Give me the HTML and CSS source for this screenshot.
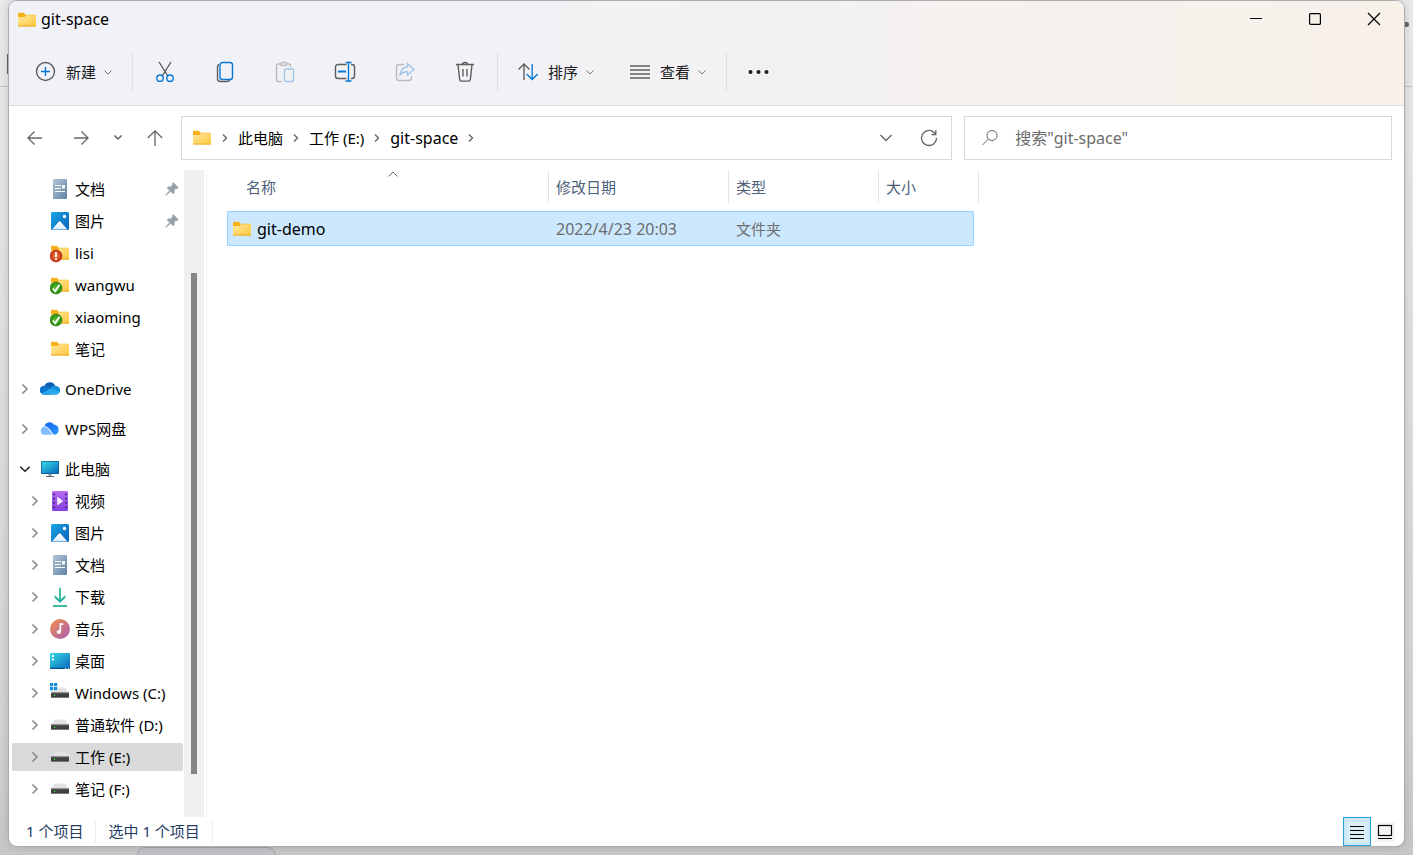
FILE: index.html
```html
<!DOCTYPE html>
<html lang="zh-CN">
<head>
<meta charset="utf-8">
<meta name="viewport" content="width=device-width, initial-scale=1">
<title>git-space</title>
<link rel="stylesheet" href="styles.css">
</head>
<body>
<svg class="sprite" aria-hidden="true">
  <defs>
    <linearGradient id="g-folder" x1="0" y1="0" x2="1" y2="1"><stop offset="0" stop-color="#ffe7a0"/><stop offset="1" stop-color="#ffc83d"/></linearGradient>
    <linearGradient id="g-doc" x1="0" y1="0" x2="1" y2="1"><stop offset="0" stop-color="#b3c6d8"/><stop offset="1" stop-color="#5f80a3"/></linearGradient>
    <linearGradient id="g-pic" x1="0" y1="0" x2="1" y2="1"><stop offset="0" stop-color="#18a4e6"/><stop offset="1" stop-color="#0a60b5"/></linearGradient>
    <linearGradient id="g-snow" x1="0" y1="0" x2="0" y2="1"><stop offset="0" stop-color="#fff"/><stop offset="1" stop-color="#d9ecfa"/></linearGradient>
    <linearGradient id="g-screen" x1="0" y1="0" x2="1" y2="1"><stop offset="0" stop-color="#35dbe6"/><stop offset="1" stop-color="#0a67bd"/></linearGradient>
    <linearGradient id="g-video" x1="0" y1="0" x2="0" y2="1"><stop offset="0" stop-color="#b56af0"/><stop offset="1" stop-color="#8540df"/></linearGradient>
    <linearGradient id="g-music" x1="0" y1="0" x2="1" y2="1"><stop offset="0" stop-color="#f59048"/><stop offset="1" stop-color="#a55bb5"/></linearGradient>
    <linearGradient id="g-down" x1="0" y1="0" x2="0" y2="1"><stop offset="0" stop-color="#35c48c"/><stop offset="1" stop-color="#12a0a0"/></linearGradient>
    <linearGradient id="g-wps" x1="0" y1="0" x2="1" y2="1"><stop offset="0" stop-color="#0d62ee"/><stop offset="1" stop-color="#2f9bff"/></linearGradient>
    <radialGradient id="g-ok"><stop offset="0" stop-color="#63c536"/><stop offset="1" stop-color="#268711"/></radialGradient>
    <radialGradient id="g-bad"><stop offset="0" stop-color="#f08a3c"/><stop offset="1" stop-color="#c42b1c"/></radialGradient>
  </defs>
  <symbol id="folder" viewBox="0 0 20 20"><path d="M1 3.800a1 1 0 0 1 1-1h5l1.500 2H18a1 1 0 0 1 1 1v4H1z" fill="#f8b117"/><path d="M1 7h6.700L9.200 5.300H19V16.500H1z" fill="url(#g-folder)"/><path d="M1 16h18" stroke="#eca824"/></symbol>
  <symbol id="doc" viewBox="0 0 20 20"><rect x="3" width="14" height="20" rx="1" fill="url(#g-doc)"/><path d="M5 6.500h6M5 9.500h6M5 12.500h10" stroke="#fff" stroke-width="1.200"/><path d="M12 6h3v3.500h-3z" fill="#fff"/></symbol>
  <symbol id="pic" viewBox="0 0 20 20"><rect x="1" y="1" width="18" height="18" rx="1.500" fill="url(#g-pic)"/><path d="M2 18.500l6.700-7.700a1.200 1.200 0 0 1 1.800 0l7 7.700z" fill="url(#g-snow)"/><circle cx="14.500" cy="5.500" r="1.700" fill="#fff"/></symbol>
  <symbol id="bad" viewBox="0 0 20 20"><use href="#folder"/><circle cx="6" cy="13" r="6" fill="url(#g-bad)" stroke="#b02a1a" stroke-width=".6"/><path d="M6 9v5M6 15.300v1.700" stroke="#fff" stroke-width="1.800"/></symbol>
  <symbol id="ok" viewBox="0 0 20 20"><use href="#folder"/><circle cx="6" cy="13" r="6" fill="url(#g-ok)" stroke="#25770f" stroke-width=".6"/><path d="M2.800 13.500l2.400 2.700 4.200-6.500" stroke="#fff" stroke-width="1.800" fill="none"/></symbol>
  <symbol id="onedrive" viewBox="0 0 20 20"><path d="M4.500 7A5.800 5.800 0 0 1 15.500 7.500L10 12z" fill="#0c5fb3"/><path d="M3.500 15.500a4.200 4.200 0 0 1 1.300-8.800c2 0 3.500.8 8.700 5L9 16z" fill="#0a72cf"/><path d="M10 9.500A5.200 5.200 0 0 1 15.500 7a4.400 4.400 0 0 1 4.200 6.500z" fill="#1490df"/><path d="M1.500 14.500l9-5 9 3.500c-.5 1.800-1.700 2.700-3.500 2.700H4.200c-1.100 0-2-.4-2.700-1.200z" fill="#28a8ea"/></symbol>
  <symbol id="wps" viewBox="0 0 20 20"><path d="M4.500 7.500a5.200 5.200 0 0 1 9.300-2 5.300 5.300 0 0 1 1.200 10.300C11 15.500 12 8.500 4.500 7.500z" fill="url(#g-wps)"/><path d="M.8 12.300a4.300 4.300 0 0 1 6-4.500c3.500 1.500 3 6 6.700 8H4a3.500 3.500 0 0 1-3.200-3.500z" fill="#80bdff"/><path d="M5 7.700c5 .4 4.500 5.900 9 8.200" stroke="#fff" fill="none" stroke-width=".8"/></symbol>
  <symbol id="pc" viewBox="0 0 20 20"><path d="M8.500 15h3v2.500h-3z" fill="#8a99a5"/><path d="M6 17.500h8" stroke="#5d6972"/><rect x="1" y="2" width="18" height="13" rx=".7" fill="#08568f"/><rect x="1.700" y="2.700" width="16.600" height="11.600" fill="url(#g-screen)"/></symbol>
  <symbol id="video" viewBox="0 0 20 20"><rect x="2" width="16" height="20" rx="1.300" fill="url(#g-video)"/><path d="M4 2.500v15M16 2.500v15" stroke="#45207c" stroke-width="1.700" stroke-dasharray="1.700 2.600"/><path d="M7.200 5.800v8.600l6-4.300z" fill="#f7efff"/></symbol>
  <symbol id="down" viewBox="0 0 20 20"><path d="M10.500 1h-1v12L5 8.800v2l5 4.700 5-4.700v-2L10.500 13z" fill="url(#g-down)" stroke="#21b493" stroke-width=".7"/><path d="M3 19h14" stroke="#1cae93" stroke-width="1.700"/></symbol>
  <symbol id="music" viewBox="0 0 20 20"><circle cx="10" cy="10" r="10" fill="url(#g-music)"/><ellipse cx="8.800" cy="13" rx="2.200" ry="2" fill="#fff"/><path d="M10.300 13V5.200h3" stroke="#fff" stroke-width="1.700" fill="none"/></symbol>
  <symbol id="desktop" viewBox="0 0 20 20"><rect y="2" width="20" height="16" rx="1" fill="url(#g-screen)"/><path d="M0 17.300h20" stroke="#07508f" stroke-width="1.300"/><path d="M2 4h2v2H2zM2 7.500h2v2H2z" fill="#fff"/><path d="M15 17.300h1.200M18 17.300h1.200" stroke="#fff"/></symbol>
  <symbol id="drive" viewBox="0 0 20 20"><path d="M4.500 4.500h11L19 10H1z" fill="#e2e3e6"/><rect x="1" y="9.700" width="18" height="5.300" fill="#414141"/><path d="M1 14.500h18" stroke="#777"/><path d="M1 10.100h18" stroke="#626262"/><path d="M4 11.700h1.300V13H4z" fill="#23e332"/></symbol>
  <symbol id="windrive" viewBox="0 0 20 20"><use href="#drive"/><path d="M-1-1h9v9h-9z" fill="#fff"/><path d="M0 0h3.200v3.200H0zM4 0h3.200v3.200H4zM0 4h3.200v3.200H0zM4 4h3.200v3.200H4z" fill="#118bd9"/></symbol>
  <symbol id="pin" viewBox="0 0 14 14"><path d="M8.300.6l5.100 5.100c-.7.800-1.500.9-2.200.6L9.100 8.400c.3 1.500 0 2.600-.9 3.500L5.600 9.300 1 13.300.6 13 4.700 8.400 2 5.700c1-.9 2.100-1.100 3.500-.8l2.200-2.100C7.400 2 7.600 1.200 8.300.6z" fill="#949fa8" stroke="#949fa8" stroke-width=".6"/></symbol>
  <symbol id="right" viewBox="0 0 10 10"><path d="M2.500 .5l4.500 4.500-4.500 4.500" fill="none" stroke="currentColor" stroke-width="1.500"/></symbol>
  <symbol id="expand" viewBox="0 0 10 10"><path d="M.3 2.800L5 7.300l4.700-4.500" fill="none" stroke="currentColor" stroke-width="1.500"/></symbol>
</svg>

<div class="backdrop" aria-hidden="true"><i class="back-line"></i><i class="back-mark"></i><i class="back-star"></i><i class="back-tab"></i></div>

<div class="window">
  <div class="chrome">
    <header class="titlebar">
      <svg class="icon"><use href="#folder"/></svg>
      <h1 class="title">git-space</h1>
      <div class="controls">
        <button class="control" aria-label="最小化"><svg class="glyph" viewBox="0 0 12 12"><path d="M0 5.500h12"/></svg></button>
        <button class="control" aria-label="最大化"><svg class="glyph" viewBox="0 0 12 12"><rect x=".6" y=".6" width="10.800" height="10.800" rx="1"/></svg></button>
        <button class="control" aria-label="关闭"><svg class="glyph" viewBox="0 0 12 12"><path d="M0 0l12 12M12 0L0 12"/></svg></button>
      </div>
    </header>
    <div class="toolbar" role="toolbar" aria-label="命令栏">
      <button class="command"><svg class="tool" viewBox="0 0 20 20"><circle cx="9.500" cy="9.500" r="9"/><path class="blue" d="M9.500 5v9M5 9.500h9"/></svg><span>新建</span><svg class="drop" viewBox="0 0 8 8"><path d="M.5 2.500L4 6l3.500-3.500"/></svg></button>
      <i class="rule"></i>
      <div class="group">
        <button class="tool-btn" aria-label="剪切"><svg class="tool" viewBox="0 0 20 20"><path d="M4 0l8.500 13.500M16 0L7.500 13.500"/><circle class="blue" cx="5" cy="16.200" r="3.200"/><circle class="blue" cx="15" cy="16.200" r="3.200"/></svg></button>
        <button class="tool-btn" aria-label="复制"><svg class="tool" viewBox="0 0 20 20"><path d="M4 2.500C3 3 2.500 3.800 2.500 5v11.500c0 2 1 3 3 3H12c1.400 0 2.400-.5 2.800-1.500"/><rect class="blue" x="5" y=".5" width="12.500" height="17" rx="2.500"/></svg></button>
        <button class="tool-btn faded" aria-label="粘贴"><svg class="tool" viewBox="0 0 20 20"><path d="M6 2H3C2 2 1.500 2.500 1.500 3.500v14c0 1 .5 2 1.500 2h4M11 2h3c1 0 1.500.5 1.500 1.500V5"/><rect x="5.500" y=".5" width="6" height="3" rx="1.500"/><rect class="blue" x="9.500" y="7" width="9" height="12.500" rx="1.500"/></svg></button>
        <button class="tool-btn" aria-label="重命名"><svg class="tool" viewBox="0 0 20 20"><path d="M11.500 2.500H3c-1.500 0-2.500 1-2.500 2.500v9c0 1.500 1 2.500 2.500 2.500h8.500M16 2.500h1c1.500 0 2.500 1 2.500 2.500v9c0 1.500-1 2.500-2.500 2.500h-1"/><path class="blue" d="M13.500.5v18.500M10.500.5h6M10.500 19h6"/><path class="blue bold" d="M3 9.500h8"/></svg></button>
        <button class="tool-btn faded" aria-label="共享"><svg class="tool" viewBox="0 0 20 20"><path d="M9 2.500H4c-1.700 0-2.500.8-2.500 2.500v11c0 1.700.8 2.500 2.500 2.500h10c1.700 0 2.500-.8 2.500-2.500v-2"/><path class="blue" d="M12.500 1.500L19 7.500l-6.500 5.500V9.800C9 9.800 6.800 11 5 13c.5-4.800 3.200-7.800 7.500-8.300z"/></svg></button>
        <button class="tool-btn" aria-label="删除"><svg class="tool" viewBox="0 0 20 20"><path d="M1 2.500h18M7.500 2.500c0-2.600 5-2.600 5 0M3 2.500l1.600 14.600c.2 1.400.8 2 2.100 2h6.600c1.300 0 1.900-.6 2.100-2L17 2.500M8 7v7.500M12 7v7.500"/></svg></button>
      </div>
      <i class="rule"></i>
      <div class="group">
        <button class="command"><svg class="tool" viewBox="0 0 20 20"><path d="M6 18V2.500M.5 7.500L6 2l5.500 5.500"/><path class="blue" d="M14.200 2v15.500M8.700 12l5.500 5.500 5.500-5.500"/></svg><span>排序</span><svg class="drop" viewBox="0 0 8 8"><path d="M.5 2.500L4 6l3.500-3.500"/></svg></button>
        <button class="command"><svg class="tool" viewBox="0 0 20 20"><path d="M0 4h20M0 8h20M0 12h20M0 16h20"/></svg><span>查看</span><svg class="drop" viewBox="0 0 8 8"><path d="M.5 2.500L4 6l3.500-3.500"/></svg></button>
      </div>
      <i class="rule"></i>
      <button class="tool-btn" aria-label="更多"><svg class="tool dots" viewBox="0 0 20 20"><circle cx="1.500" cy="10" r="2"/><circle cx="9.500" cy="10" r="2"/><circle cx="17.500" cy="10" r="2"/></svg></button>
    </div>
  </div>

  <div class="location">
    <button class="nav-btn" aria-label="后退"><svg class="arrow" viewBox="0 0 16 16"><path d="M15 8H1M7.500 1.500L1 8l6.500 6.500"/></svg></button>
    <button class="nav-btn" aria-label="前进"><svg class="arrow" viewBox="0 0 16 16"><path d="M1 8h14M8.500 1.500L15 8l-6.500 6.500"/></svg></button>
    <button class="nav-btn small" aria-label="最近位置"><svg class="drop heavy" viewBox="0 0 8 8"><path d="M.5 1.500L4 5l3.500-3.500"/></svg></button>
    <button class="nav-btn" aria-label="向上"><svg class="arrow" viewBox="0 0 16 16"><path d="M8 16V.8M.8 8L8 .8 15.200 8"/></svg></button>
    <nav class="address" aria-label="地址">
      <svg class="icon"><use href="#folder"/></svg>
      <svg class="crumb-sep" viewBox="0 0 8 8"><path d="M2 .5L5.500 4 2 7.500"/></svg>
      <a class="crumb" href="#">此电脑</a>
      <svg class="crumb-sep" viewBox="0 0 8 8"><path d="M2 .5L5.500 4 2 7.500"/></svg>
      <a class="crumb" href="#">工作 (E:)</a>
      <svg class="crumb-sep" viewBox="0 0 8 8"><path d="M2 .5L5.500 4 2 7.500"/></svg>
      <a class="crumb large" href="#">git-space</a>
      <svg class="crumb-sep" viewBox="0 0 8 8"><path d="M2 .5L5.500 4 2 7.500"/></svg>
      <span class="address-tools">
        <button class="nav-btn" aria-label="历史记录"><svg class="history" viewBox="0 0 12 12"><path d="M.5 3L6 8.500 11.500 3"/></svg></button>
        <button class="nav-btn" aria-label="刷新"><svg class="arrow" viewBox="0 0 16 16"><path d="M15.500 8A7.500 7.500 0 1 1 13 2.400L14.500 4M14.800.2v4.300h-4.300"/></svg></button>
      </span>
    </nav>
    <label class="search"><svg class="arrow thin" viewBox="0 0 16 16"><circle cx="10" cy="5.500" r="5"/><path d="M6.400 9.100L.5 15"/></svg><input class="search-input large" type="search" aria-label="搜索" placeholder='搜索"git-space"'></label>
  </div>

  <main class="content">
    <aside class="sidebar">
      <ul class="tree">
        <li><button class="node pinned"><svg class="icon"><use href="#doc"/></svg><span>文档</span><svg class="pin"><use href="#pin"/></svg></button></li>
        <li><button class="node pinned"><svg class="icon"><use href="#pic"/></svg><span>图片</span><svg class="pin"><use href="#pin"/></svg></button></li>
        <li><button class="node pinned"><svg class="icon"><use href="#bad"/></svg><span>lisi</span></button></li>
        <li><button class="node pinned"><svg class="icon"><use href="#ok"/></svg><span>wangwu</span></button></li>
        <li><button class="node pinned"><svg class="icon"><use href="#ok"/></svg><span>xiaoming</span></button></li>
        <li><button class="node pinned"><svg class="icon"><use href="#folder"/></svg><span>笔记</span></button></li>
        <li class="root"><button class="node"><svg class="chev"><use href="#right"/></svg><svg class="icon"><use href="#onedrive"/></svg><span>OneDrive</span></button></li>
        <li class="root"><button class="node"><svg class="chev"><use href="#right"/></svg><svg class="icon"><use href="#wps"/></svg><span>WPS网盘</span></button></li>
        <li class="root"><button class="node" aria-expanded="true"><svg class="chev open"><use href="#expand"/></svg><svg class="icon"><use href="#pc"/></svg><span>此电脑</span></button></li>
        <li><button class="node child"><svg class="chev"><use href="#right"/></svg><svg class="icon"><use href="#video"/></svg><span>视频</span></button></li>
        <li><button class="node child"><svg class="chev"><use href="#right"/></svg><svg class="icon"><use href="#pic"/></svg><span>图片</span></button></li>
        <li><button class="node child"><svg class="chev"><use href="#right"/></svg><svg class="icon"><use href="#doc"/></svg><span>文档</span></button></li>
        <li><button class="node child"><svg class="chev"><use href="#right"/></svg><svg class="icon"><use href="#down"/></svg><span>下载</span></button></li>
        <li><button class="node child"><svg class="chev"><use href="#right"/></svg><svg class="icon"><use href="#music"/></svg><span>音乐</span></button></li>
        <li><button class="node child"><svg class="chev"><use href="#right"/></svg><svg class="icon"><use href="#desktop"/></svg><span>桌面</span></button></li>
        <li><button class="node child"><svg class="chev"><use href="#right"/></svg><svg class="icon"><use href="#windrive"/></svg><span>Windows (C:)</span></button></li>
        <li><button class="node child"><svg class="chev"><use href="#right"/></svg><svg class="icon"><use href="#drive"/></svg><span>普通软件 (D:)</span></button></li>
        <li><button class="node child current"><svg class="chev"><use href="#right"/></svg><svg class="icon"><use href="#drive"/></svg><span>工作 (E:)</span></button></li>
        <li><button class="node child"><svg class="chev"><use href="#right"/></svg><svg class="icon"><use href="#drive"/></svg><span>笔记 (F:)</span></button></li>
      </ul>
      <div class="scroll" aria-hidden="true"><i class="thumb"></i></div>
    </aside>
    <section class="files">
      <table class="list">
        <thead><tr><th class="name">名称<svg class="caret" viewBox="0 0 10 6"><path d="M.5 5.500L5 1l4.500 4.500"/></svg></th><th class="date">修改日期</th><th class="type">类型</th><th class="size">大小</th></tr></thead>
        <tbody><tr><td class="large"><span class="file-name"><svg class="icon"><use href="#folder"/></svg>git-demo</span></td><td class="large">2022/4/23 20:03</td><td>文件夹</td><td></td></tr></tbody>
      </table>
    </section>
  </main>

  <footer class="status">
    <span class="status-item">1 个项目</span>
    <span class="status-item">选中 1 个项目</span>
    <div class="views">
      <button class="view active" aria-label="详细信息"><svg class="view-icon" viewBox="0 0 20 20"><rect class="tile" width="20" height="20"/><path d="M3 4.500h14M3 8.500h14M3 12.500h14M3 16.500h14"/></svg></button>
      <button class="view" aria-label="大图标"><svg class="view-icon" viewBox="0 0 20 20"><rect class="tile" width="20" height="20"/><rect x="3.500" y="3.500" width="13" height="10"/><path d="M3 16.500h14"/></svg></button>
    </div>
  </footer>
</div>
</body>
</html>
```
FILE: styles.css
```css
* { box-sizing: border-box; }

body {
  margin: 0;
  height: 100vh;
  display: flex;
  padding: 0 8px 8px;
  background: linear-gradient(#e9e9e9, #e2e2e2 30%, #d2d2d2 85%, #c6c6c6);
  font: 15px/20px "Noto Sans", "Noto Sans CJK SC", sans-serif;
  color: #000;
  overflow: hidden;
}

button, input { font: inherit; color: inherit; border: 0; background: none; padding: 0; }
i { display: block; }
svg { flex: none; }
.sprite { position: absolute; width: 0; height: 0; }

/* Whatever shows behind the window */
.backdrop { position: absolute; inset: 0; overflow: hidden; }
.back-line { position: absolute; top: 86px; width: 100%; height: 1px; background: #c4c4c4; }
.back-mark { position: absolute; top: 54px; left: 7px; width: 2px; height: 20px; background: #62626a; }
.back-star { position: absolute; top: 22px; right: 4px; width: 6px; height: 5px; border-radius: 2px; background: #62666a; }
.back-tab { position: absolute; left: 137px; bottom: -12px; width: 139px; height: 20px; border: 1px solid #a4a6aa; border-radius: 8px; background: #bfc1c4; }

.window {
  position: relative;
  flex: 1;
  min-width: 0;
  display: flex;
  flex-direction: column;
  border: 1px solid #acacb0;
  border-radius: 9px;
  background: #fff;
  box-shadow: 0 0 8px rgba(0, 0, 0, .15);
  overflow: hidden;
}

.icon { width: 20px; height: 20px; overflow: visible; }
.large, .title { font-size: 16px; }

/* Title and command bars */
.chrome {
  border-bottom: 1px solid #dedee2;
  background: linear-gradient(90deg, #f0f2f8, #f2f1f5 35%, #f3f2f2 58%, #f7f1ed 78%, #f8f1ea);
}
.titlebar { display: flex; align-items: center; height: 38px; padding-left: 8px; }
.title { margin: 0 0 0 4px; padding-bottom: 2px; font-weight: 400; }
.controls { display: flex; align-self: stretch; margin-left: auto; padding-right: 1px; }
.control { width: 59px; padding-bottom: 2px; display: grid; place-items: center; }
.glyph { width: 12px; height: 12px; fill: none; stroke: #000; stroke-width: 1.2; overflow: visible; }
.toolbar { display: flex; align-items: center; gap: 12px; height: 66px; padding-left: 19px; }
.group { display: flex; gap: 20px; }
.command { display: flex; align-items: center; height: 40px; padding: 0 8px; color: #1b1b1b; }
.tool { width: 20px; height: 20px; fill: none; stroke: #5d5d5d; stroke-width: 1.4; overflow: visible; }
.command .tool { margin-right: 10px; }
.drop { width: 8px; height: 8px; margin-left: 8px; fill: none; stroke: #777; overflow: visible; }
.drop.heavy { margin: 0; stroke: #555; stroke-width: 1.4; }
.blue { stroke: #0878d4; }
.bold { stroke-width: 2; }
.tool-btn { width: 40px; height: 40px; display: grid; place-items: center; }
.faded .tool { opacity: .35; }
.tool.dots { fill: #1b1b1b; stroke: none; }
.rule { width: 1px; height: 40px; background: #e0e0e5; }

/* Address and search */
.location { display: flex; align-items: center; gap: 6px; padding: 10px 12px 10px 6px; }
.nav-btn { width: 40px; height: 40px; flex: none; display: grid; place-items: center; }
.nav-btn.small { width: 22px; }
.arrow { width: 16px; height: 16px; fill: none; stroke: #666; stroke-width: 1.3; overflow: visible; }
.arrow.thin { stroke-width: 1; }
.address { flex: 31; display: flex; align-items: center; height: 44px; padding-left: 10px; border: 1px solid #d9d9d9; }
.crumb { padding-bottom: 1px; color: #000; text-decoration: none; }
.crumb-sep { width: 8px; height: 8px; margin: 0 9px; fill: none; stroke: #666; stroke-width: 1.4; }
.address-tools { display: flex; gap: 3px; margin-left: auto; padding-right: 2px; }
.history { width: 12px; height: 12px; fill: none; stroke: #666; stroke-width: 1.4; }
.search { flex: 16; display: flex; align-items: center; gap: 17px; height: 44px; margin-left: 6px; padding: 0 17px; border: 1px solid #d9d9d9; }
.search-input { flex: 1; min-width: 0; height: 40px; outline: 0; }
.search-input::placeholder { color: #6b6b6b; opacity: 1; }

/* Navigation tree */
.content { flex: 1; min-height: 0; display: flex; }
.sidebar { display: flex; width: 198px; border-right: 1px solid #f3f3f3; }
.tree { flex: 1; min-width: 0; margin: 0; padding: 3px 1px 0 3px; list-style: none; overflow: hidden; }
.tree li { padding: 2px 0; }
.tree .root { padding-top: 10px; }
.node { display: flex; align-items: center; width: 100%; height: 28px; padding-left: 8px; border-radius: 2px; text-align: left; white-space: nowrap; }
.node.child { padding-left: 18px; }
.node.pinned { padding-left: 38px; }
.node .icon { margin-right: 5px; }
.chev { width: 10px; height: 10px; margin-right: 10px; color: #858585; overflow: visible; }
.chev.open { color: #222; }
.current { background: #d9d9d9; }
.pin { width: 14px; height: 14px; margin: 0 4px 0 auto; }
.scroll { display: flex; justify-content: center; width: 20px; margin-right: 2px; background: #f0f0f0; }
.thumb { width: 6px; margin: 103px 0 43px; background: #858585; }

/* File list */
.files { flex: 1; min-width: 0; padding-left: 20px; }
.list { width: 747px; table-layout: fixed; border-collapse: separate; border-spacing: 0; text-align: left; }
.list th { position: relative; height: 41px; padding: 0 7px 7px; font-weight: 400; color: #4c607a; }
.list th::after { content: ""; position: absolute; top: 0; right: 0; width: 1px; height: 33px; background: #e5e5e5; }
.list th.name { width: 322px; padding-left: 19px; }
.date { width: 180px; }
.type { width: 150px; }
.list th.size::after { right: -5px; }
.caret { position: absolute; top: 1px; left: 50%; width: 10px; height: 6px; fill: none; stroke: #666; }
.list td { height: 35px; padding: 0 7px; border: solid #99d1ff; border-width: 1px 0; background: #cce8ff; color: #6d6d6d; }
.list td:first-child { padding-left: 4px; border-left-width: 1px; border-radius: 2px 0 0 2px; color: #000; }
.list td:last-child { border-right-width: 1px; border-radius: 0 2px 2px 0; }
.file-name { display: flex; align-items: center; gap: 5px; }

/* Status bar */
.status { display: flex; align-items: center; height: 29px; padding-left: 17px; color: #1e3a5f; }
.status-item { padding: 0 12px 2px 0; margin-right: 12px; border-right: 1px solid #eee; }
.views { display: flex; align-self: stretch; margin-left: auto; padding-right: 5px; }
.view { width: 28px; display: grid; place-items: center; }
.view.active { border: 1px solid #26a0da; background: #cce8f6; }
.view-icon { width: 20px; height: 20px; fill: none; stroke: #000; stroke-width: 1.2; }
.tile { fill: #f5f5f5; stroke: none; }
.active .tile { fill: #dceef7; }
```
